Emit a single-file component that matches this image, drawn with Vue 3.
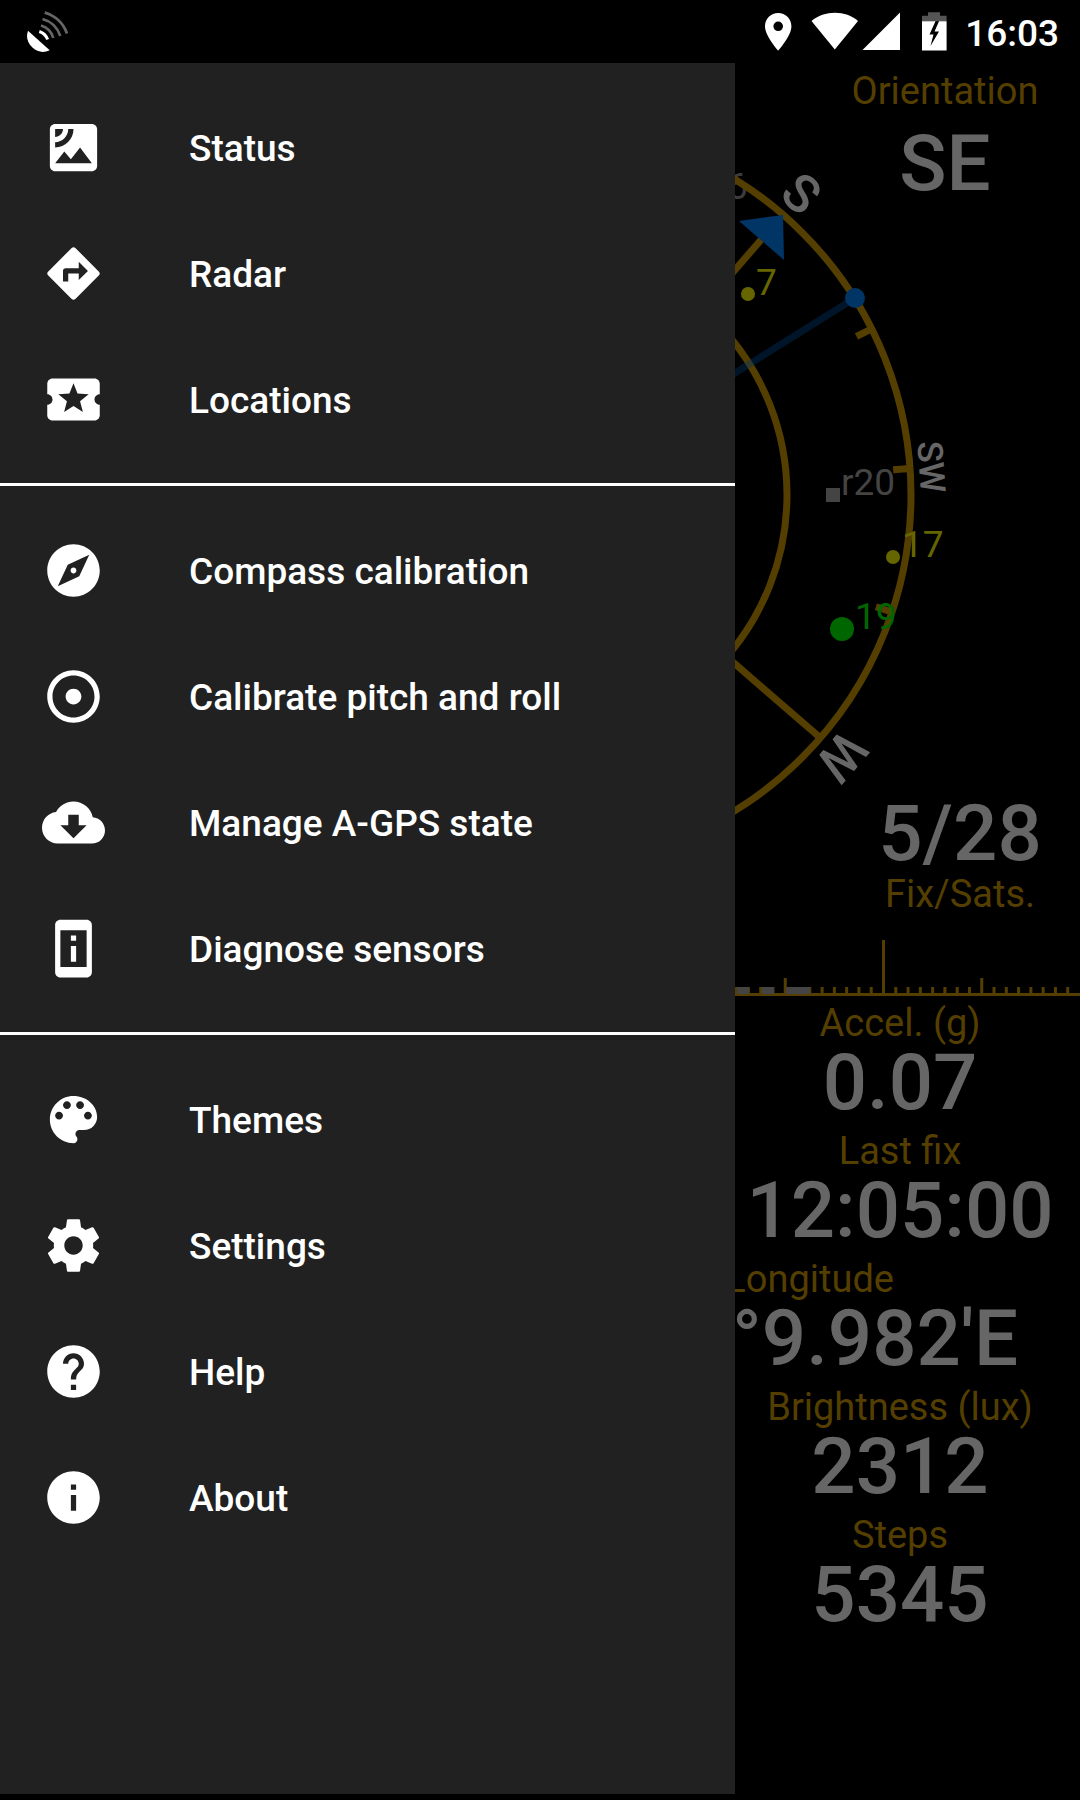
<script setup>
const groups = [
  [
    { label: 'Status', icon: 'M19 3H5c-1.1 0-2 .9-2 2v14c0 1.1.9 2 2 2h14c1.1 0 2-.9 2-2V5c0-1.1-.9-2-2-2zM5 4.99h3C8 6.65 6.66 8 5 8V4.99zM5 12v-2c2.76 0 5-2.25 5-5.01h2C12 8.86 8.87 12 5 12zm0 6l3.5-4.5 2.5 3.01L14.5 12l4.5 6H5z' },
    { label: 'Radar', icon: 'M21.71 11.29l-9-9c-.39-.39-1.02-.39-1.41 0l-9 9c-.39.39-.39 1.02 0 1.41l9 9c.39.39 1.02.39 1.41 0l9-9c.39-.38.39-1.01 0-1.41zM14 14.5V12h-4v3H8v-4c0-.55.45-1 1-1h5V7.5l3.5 3.5-3.5 3.5z' },
    { label: 'Locations', icon: 'M20 12c0-1.1.9-2 2-2V6c0-1.1-.9-2-2-2H4c-1.1 0-1.99.9-1.99 2v4c1.1 0 1.99.9 1.99 2s-.89 2-2 2v4c0 1.1.9 2 2 2h16c1.1 0 2-.9 2-2v-4c-1.1 0-2-.9-2-2zm-4.42 4.8L12 14.5l-3.58 2.3 1.08-4.12-3.29-2.69 4.24-.25L12 5.8l1.54 3.95 4.24.25-3.29 2.69 1.09 4.11z' },
  ],
  [
    { label: 'Compass calibration', icon: 'M12 10.9c-.61 0-1.1.49-1.1 1.1s.49 1.1 1.1 1.1c.61 0 1.1-.49 1.1-1.1s-.49-1.1-1.1-1.1zM12 2C6.48 2 2 6.48 2 12s4.48 10 10 10 10-4.48 10-10S17.52 2 12 2zm2.19 12.19L6 18l3.81-8.19L18 6l-3.81 8.19z' },
    { label: 'Calibrate pitch and roll', icon: 'M12 2C6.49 2 2 6.49 2 12s4.49 10 10 10 10-4.49 10-10S17.51 2 12 2zm0 18c-4.41 0-8-3.59-8-8s3.59-8 8-8 8 3.59 8 8-3.59 8-8 8zm3-8c0 1.66-1.34 3-3 3s-3-1.34-3-3 1.34-3 3-3 3 1.34 3 3z' },
    { label: 'Manage A-GPS state', icon: 'M19.35 10.04C18.67 6.59 15.64 4 12 4 9.11 4 6.6 5.64 5.35 8.04 2.34 8.36 0 10.91 0 14c0 3.31 2.69 6 6 6h13c2.76 0 5-2.24 5-5 0-2.64-2.05-4.78-4.65-4.96zM17 13l-5 5-5-5h3V9h4v4h3z' },
    { label: 'Diagnose sensors', icon: 'M13 7h-2v2h2V7zm0 4h-2v6h2v-6zm4-9.99L7 1c-1.1 0-2 .9-2 2v18c0 1.1.9 2 2 2h10c1.1 0 2-.9 2-2V3c0-1.1-.9-1.99-2-1.99zM17 19H7V5h10v14z' },
  ],
  [
    { label: 'Themes', icon: 'M12 3c-4.97 0-9 4.03-9 9s4.03 9 9 9c.83 0 1.5-.67 1.5-1.5 0-.39-.15-.74-.39-1.01-.23-.26-.38-.61-.38-.99 0-.83.67-1.5 1.5-1.5H16c2.76 0 5-2.24 5-5 0-4.42-4.03-8-9-8zm-5.5 9c-.83 0-1.5-.67-1.5-1.5S5.67 9 6.5 9 8 9.67 8 10.5 7.33 12 6.5 12zm3-4C8.67 8 8 7.33 8 6.5S8.67 5 9.5 5s1.5.67 1.5 1.5S10.33 8 9.5 8zm5 0c-.83 0-1.5-.67-1.5-1.5S13.67 5 14.5 5s1.5.67 1.5 1.5S15.33 8 14.5 8zm3 4c-.83 0-1.5-.67-1.5-1.5S16.67 9 17.5 9s1.5.67 1.5 1.5-.67 1.5-1.5 1.5z' },
    { label: 'Settings', icon: 'M19.43 12.98c.04-.32.07-.64.07-.98s-.03-.66-.07-.98l2.11-1.65c.19-.15.24-.42.12-.64l-2-3.46c-.12-.22-.39-.3-.61-.22l-2.49 1c-.52-.4-1.08-.73-1.69-.98l-.38-2.65C14.46 2.18 14.25 2 14 2h-4c-.25 0-.46.18-.49.42l-.38 2.65c-.61.25-1.17.59-1.69.98l-2.49-1c-.23-.09-.49 0-.61.22l-2 3.46c-.13.22-.07.49.12.64l2.11 1.65c-.04.32-.07.65-.07.98s.03.66.07.98l-2.11 1.65c-.19.15-.24.42-.12.64l2 3.46c.12.22.39.3.61.22l2.49-1c.52.4 1.08.73 1.69.98l.38 2.65c.03.24.24.42.49.42h4c.25 0 .46-.18.49-.42l.38-2.65c.61-.25 1.17-.59 1.69-.98l2.49 1c.23.09.49 0 .61-.22l2-3.46c.12-.22.07-.49-.12-.64l-2.11-1.65zM12 15.5c-1.93 0-3.5-1.57-3.5-3.5s1.57-3.5 3.5-3.5 3.5 1.57 3.5 3.5-1.57 3.5-3.5 3.5z' },
    { label: 'Help', icon: 'M12 2C6.48 2 2 6.48 2 12s4.48 10 10 10 10-4.48 10-10S17.52 2 12 2zm1 17h-2v-2h2v2zm2.07-7.75l-.9.92C13.45 12.9 13 13.5 13 15h-2v-.5c0-1.1.45-2.1 1.17-2.83l1.24-1.26c.37-.36.59-.86.59-1.41 0-1.1-.9-2-2-2s-2 .9-2 2H8c0-2.21 1.79-4 4-4s4 1.79 4 4c0 .88-.36 1.68-.93 2.25z' },
    { label: 'About', icon: 'M12 2C6.48 2 2 6.48 2 12s4.48 10 10 10 10-4.48 10-10S17.52 2 12 2zm1 15h-2v-6h2v6zm0-8h-2V7h2v2z' },
  ],
]

const readings = [
  { label: 'Accel. (g)', value: '0.07' },
  { label: 'Last fix', value: '12:05:00' },
  { label: 'Longitude', value: "°9.982'E", wide: true },
  { label: 'Brightness (lux)', value: '2312' },
  { label: 'Steps', value: '5345' },
]

// Compass bearings on screen, clockwise from the top
const heading = 40.9
const cardinals = [
  { text: 'S', angle: heading, size: 52, radius: 381 },
  { text: 'SW', angle: heading + 45, size: 35, radius: 380 },
  { text: 'W', angle: heading + 90, size: 52, radius: 381 },
]
const minorTicks = [heading + 22.5, heading + 45, heading + 67.5]

// Scale marks, counted from the long centre mark
const marks = []
for (let n = -12; n <= 15; n++) {
  const height = n === 0 ? 56 : n % 8 === 0 ? 18 : 9
  marks.push({ x: 148.500 + n * 12.28 - 1.5, height })
}
const bars = [
  { x: 2, w: 12 },
  { x: 27, w: 12 },
  { x: 51, w: 12 },
  { x: 63, w: 12 },
]
</script>

<template>
  <div class="screen">
    <header class="statusbar">
      <svg class="gps" width="42" height="44" viewBox="0 0 42 44" aria-hidden="true">
        <path d="M2 20.7A16 16 0 0 0 23.7 40.3Z" fill="#fff" />
        <g fill="none" stroke-width="2.7">
          <path d="M13.3 21.5A13 13 0 0 1 21.6 29.6" stroke="#fff" stroke-width="3" />
          <path d="M15 15.5A18 18 0 0 1 27.3 28" stroke="#666" />
          <path d="M16.5 9A26 26 0 0 1 34.3 26" stroke="#666" />
          <path d="M18.7 2.6A33 33 0 0 1 41 23.6" stroke="#666" />
        </g>
      </svg>
      <div class="indicators">
        <svg width="182" height="40" viewBox="0 0 182 40" aria-hidden="true">
          <path fill="#fff" fill-rule="evenodd" d="M13.2 1C5.9 1 0 6.9 0 14.2 0 24.1 13.2 38.5 13.2 38.5S26.4 24.1 26.4 14.2C26.4 6.9 20.5 1 13.2 1zM13.2 9.500a4.800 4.800 0 1 1 0 9.600 4.800 4.800 0 0 1 0-9.600z" />
          <path fill="#fff" d="M46.5 9C59 -2 81 -2 93 9L69.8 37.5Z" />
          <path fill="#fff" d="M135 .5V38H97.5Z" />
          <path fill="#555" d="M163 .3h12v3.400h6.600v5.600h-24.600V3.700h6z" />
          <path fill="#fff" fill-rule="evenodd" d="M157 9.300h24.600V38.500H157zM170.500 9.300L164.500 22.500H168.500L165.500 34L174 19.500H169.500L174 9.300Z" />
        </svg>
        <time>16:03</time>
      </div>
    </header>

    <div class="body">
      <nav class="drawer" aria-label="Main">
        <ul v-for="(group, i) in groups" :key="i">
          <li v-for="item in group" :key="item.label">
            <a href="#">
              <svg width="63" height="63" viewBox="0 0 24 24" aria-hidden="true">
                <path :d="item.icon" />
              </svg>
              <span>{{ item.label }}</span>
            </a>
          </li>
        </ul>
      </nav>

      <main class="dashboard">
        <section class="dial">
          <svg class="sky" width="345" height="877" viewBox="0 0 345 877" aria-hidden="true">
            <text x="-8" y="136" class="sat" fill="#3c3c3c">6</text>
            <g transform="translate(-195 432)">
              <g fill="none" stroke="#553f00" stroke-width="7">
                <circle r="371" />
                <circle r="247" />
                <g :transform="`rotate(${heading})`">
                  <path d="M0 0V-340" />
                  <path d="M0 0H371" />
                </g>
                <path v-for="a in minorTicks" :key="a" d="M0 -354V-371" :transform="`rotate(${a})`" />
              </g>
              <text
                v-for="c in cardinals"
                :key="c.text"
                :transform="`rotate(${c.angle})`"
                :y="-c.radius"
                :font-size="c.size"
                class="cardinal"
              >{{ c.text }}</text>
            </g>
            <path d="M-195 432L120 235" stroke="#003566" stroke-opacity=".4" stroke-width="7" />
            <path d="M48 152L4 158L49 197Z" fill="#003566" />
            <circle cx="120" cy="235" r="10" fill="#003566" />
            <g fill="#666600" class="sat">
              <circle cx="13" cy="231" r="7" />
              <text x="21" y="232">7</text>
              <circle cx="158" cy="494" r="7" />
              <text x="167" y="494">17</text>
            </g>
            <g fill="#444" class="sat">
              <rect x="91" y="425" width="14" height="14" />
              <text x="106" y="432">r20</text>
            </g>
            <g fill="#006600" class="sat">
              <circle cx="107" cy="566" r="12" />
              <text x="120" y="566">19</text>
            </g>
          </svg>
          <div class="corners">
            <div class="readout orientation">
              <span class="label">Orientation</span>
              <strong class="value">SE</strong>
            </div>
            <div class="readout fix">
              <strong class="value">5/28</strong>
              <span class="label">Fix/Sats.</span>
            </div>
          </div>
        </section>

        <svg class="scale" width="345" height="56" viewBox="0 0 345 56" aria-hidden="true">
          <g fill="#553f00">
            <rect y="53" width="345" height="3" />
            <rect v-for="m in marks" :key="m.x" :x="m.x" :y="56 - m.height" width="3" :height="m.height" />
          </g>
          <rect v-for="b in bars" :key="b.x" :x="b.x" y="47" :width="b.w" height="7" fill="#444" />
        </svg>

        <section class="readings">
          <div v-for="r in readings" :key="r.label" class="readout" :class="{ wide: r.wide }">
            <span class="label">{{ r.label }}</span>
            <strong class="value">{{ r.value }}</strong>
          </div>
        </section>
      </main>
    </div>
  </div>
</template>

<style>
body {
  margin: 0;
  background: #000;
}
</style>

<style scoped>
.screen {
  display: flex;
  flex-direction: column;
  min-height: 100vh;
  background: #000;
  color: #fff;
  font-family: Roboto, sans-serif;
}

.statusbar {
  display: flex;
  justify-content: space-between;
  align-items: center;
  height: 63px;
  padding: 0 21px 0 26px;
}

.indicators {
  display: flex;
  align-items: center;
  gap: 18px;
}

.indicators time {
  font-size: 37px;
  font-weight: 500;
  line-height: 40px;
  padding-top: 4px;
}

.body {
  display: flex;
  flex: 1;
}

.drawer {
  flex: 1;
  margin-bottom: 6px;
  background: #212121;
}

.drawer ul {
  margin: 0;
  padding: 21px 0;
  list-style: none;
}

.drawer ul + ul {
  border-top: 3px solid #fff;
}

.drawer a {
  display: flex;
  align-items: center;
  gap: 84px;
  height: 126px;
  padding: 0 42px;
  color: #fff;
  font-size: 37px;
  font-weight: 500;
  line-height: 44px;
  text-decoration: none;
}

.drawer a svg {
  flex: none;
  fill: #fff;
}

.drawer a span {
  padding-top: 4px;
}

.dashboard {
  flex: 0 0 345px;
  overflow: hidden;
}

.dial {
  display: grid;
}

.sky,
.corners {
  grid-area: 1 / 1;
}

.sky,
.scale {
  display: block;
}

.sat {
  font-size: 37px;
}

.cardinal {
  fill: #666;
  font-weight: 500;
  text-anchor: middle;
}

.corners {
  display: flex;
  flex-direction: column;
  justify-content: space-between;
  align-items: flex-end;
  padding: 6px 0 24px;
}

.readout {
  display: flex;
  flex-direction: column;
  align-items: center;
}

.orientation {
  gap: 13px;
  width: 270px;
}

.fix {
  width: 240px;
}

.label {
  color: #553f00;
  font-size: 38px;
  line-height: 44px;
  white-space: nowrap;
}

.value {
  color: #666;
  font-size: 78px;
  font-weight: 500;
  line-height: 76px;
  white-space: nowrap;
}

.readings {
  display: flex;
  flex-direction: column;
  gap: 8px;
  padding: 5px 0;
}

.readings .readout {
  padding-right: 15px;
}

.readings .wide {
  align-items: flex-end;
  padding-right: 62px;
}

.wide .label {
  margin-right: 124px;
}
</style>
